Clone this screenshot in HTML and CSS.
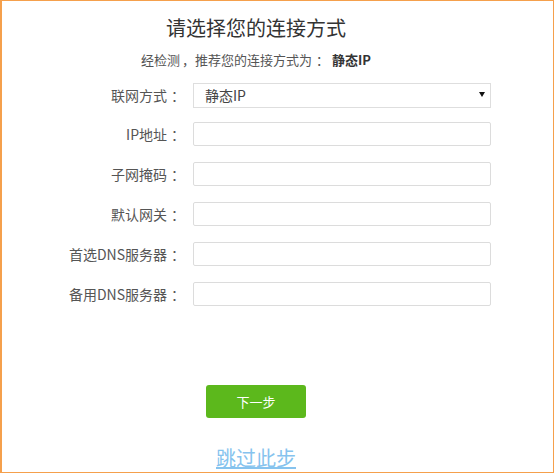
FILE: index.html
```html
<!DOCTYPE html>
<html lang="zh-CN">
<head>
<meta charset="utf-8">
<title>请选择您的连接方式</title>
<link rel="stylesheet" href="styles.css">
</head>
<body>
<div class="frame">
  <div class="content">
    <h1 class="title">请选择您的连接方式</h1>
    <p class="subtitle">经检测<span class="comma">，</span>推荐您的连接方式为<span class="colon">：</span> <b>静态IP</b></p>
    <div class="form">
      <div class="row row-select">
        <label class="label">联网方式<span class="colon">：</span></label>
        <div class="select-wrap">
          <select class="select"><option>静态IP</option></select>
          <svg class="arrow" width="6" height="5" viewBox="0 0 6 5"><path d="M0 0H6L3 5Z" fill="#111"/></svg>
        </div>
      </div>
      <div class="row">
        <label class="label">IP地址<span class="colon">：</span></label>
        <input class="input" type="text">
      </div>
      <div class="row">
        <label class="label">子网掩码<span class="colon">：</span></label>
        <input class="input" type="text">
      </div>
      <div class="row">
        <label class="label">默认网关<span class="colon">：</span></label>
        <input class="input" type="text">
      </div>
      <div class="row">
        <label class="label">首选DNS服务器<span class="colon">：</span></label>
        <input class="input" type="text">
      </div>
      <div class="row">
        <label class="label">备用DNS服务器<span class="colon">：</span></label>
        <input class="input" type="text">
      </div>
    </div>
    <div class="actions">
      <button class="btn" type="button">下一步</button>
    </div>
    <div class="skip"><a class="skip-link" href="#">跳过此步</a></div>
  </div>
</div>
</body>
</html>
```

FILE: styles.css
```css
* { box-sizing: border-box; }
html, body { margin: 0; padding: 0; background: #fff; }
body {
  font-family: "Noto Sans CJK SC", "Noto Sans", "Liberation Sans", sans-serif;
  color: #555;
}
.frame {
  width: 554px;
  height: 473px;
  border: 1px solid #f5a04c;
  border-left-width: 2px;
}
.content {
  width: 508px;
  display: flex;
  flex-direction: column;
  align-items: center;
}
.title {
  margin: 13px 0 0;
  font-size: 20px;
  line-height: 28px;
  font-weight: normal;
  color: #333;
}
.subtitle {
  margin: 8px 0 0;
  font-size: 13px;
  line-height: 20px;
  color: #555;
}
.subtitle b { color: #333; }
.comma { padding-left: 2px; }
.colon { padding-left: 4px; }
.form {
  margin-top: 12px;
  width: 100%;
  display: flex;
  flex-direction: column;
}
.row {
  display: flex;
  align-items: center;
  height: 24px;
  margin-bottom: 16px;
}
.row-select { height: 25px; margin-bottom: 15px; }
.label {
  width: 183px;
  text-align: right;
  font-size: 14px;
  color: #555;
  margin-right: 8px;
  white-space: nowrap;
}
.select-wrap {
  position: relative;
  width: 298px;
  height: 25px;
}
.select {
  appearance: none;
  -webkit-appearance: none;
  width: 100%;
  height: 25px;
  border: 1px solid #dedede;
  border-radius: 0;
  background: #fff;
  padding: 0 0 0 11px;
  font-family: inherit;
  font-size: 14px;
  color: #444;
  outline: none;
}
.arrow {
  position: absolute;
  right: 6px;
  top: 10px;
}
.input {
  width: 298px;
  height: 24px;
  border: 1px solid #dcdcdc;
  border-radius: 2px;
  background: #fff;
  outline: none;
  padding: 0 8px;
}
.actions {
  margin-top: 63px;
}
.btn {
  width: 100px;
  height: 33px;
  border: none;
  border-radius: 3px;
  background: #5cb81c;
  color: #fff;
  font-family: inherit;
  font-size: 13px;
  cursor: pointer;
}
.skip {
  margin-top: 28px;
  font-size: 20px;
  line-height: 24px;
}
.skip-link {
  color: #86c3ee;
  text-decoration: underline;
}
```
